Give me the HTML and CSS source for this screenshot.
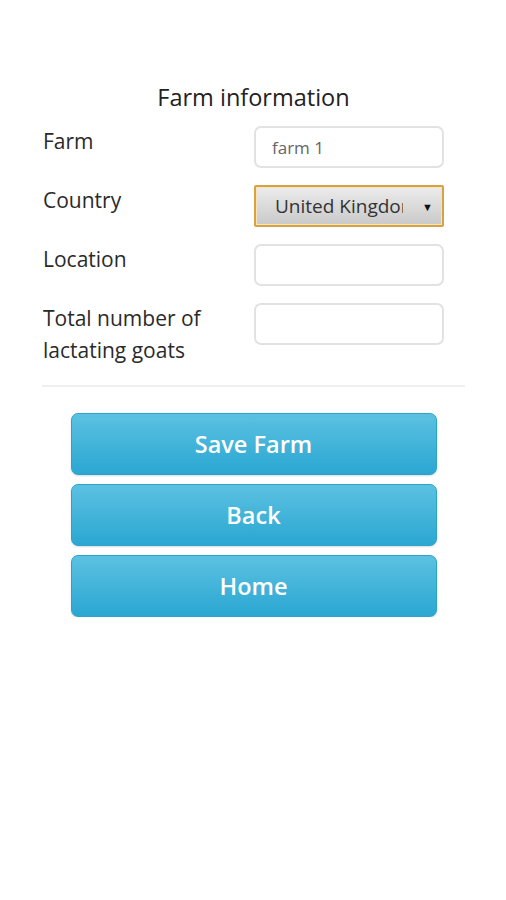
FILE: index.html
```html
<!DOCTYPE html>
<html>
<head>
<meta charset="utf-8">
<link rel="stylesheet" href="styles.css">
</head>
<body>
<div class="page">
  <h1 class="title">Farm information</h1>
  <div class="form">
    <label class="label">Farm</label>
    <div class="field"><input class="input" type="text" value="farm 1"></div>
    <label class="label">Country</label>
    <div class="field">
      <div class="select">
        <span class="select-text">United Kingdom</span>
        <span class="select-arrow">▼</span>
      </div>
    </div>
    <label class="label">Location</label>
    <div class="field"><input class="input" type="text"></div>
    <label class="label">Total number of lactating goats</label>
    <div class="field"><input class="input" type="text"></div>
  </div>
  <hr class="divider">
  <div class="buttons">
    <button class="btn">Save Farm</button>
    <button class="btn">Back</button>
    <button class="btn">Home</button>
  </div>
</div>
</body>
</html>
```
FILE: styles.css
```css
html, body {
  margin: 0;
  padding: 0;
  background: #ffffff;
}
body {
  font-family: "Open Sans", "Noto Sans", sans-serif;
  color: #222;
}
.page {
  width: 423px;
  margin-left: 42px;
  padding-top: 83px;
}
.title {
  margin: 0 0 14px 0;
  text-align: center;
  font-size: 23.5px;
  font-weight: 400;
  line-height: 29px;
  color: #222;
}
.form {
  display: grid;
  grid-template-columns: 212px 190px;
  row-gap: 17px;
}
.label {
  font-size: 21px;
  line-height: 32px;
  margin-top: -1px;
  padding-left: 1px;
  color: #2a2a2a;
  width: 185px;
}
.field {
  height: 42px;
}
.input {
  box-sizing: border-box;
  width: 190px;
  height: 42px;
  border: 2px solid #e2e2e2;
  border-radius: 7px;
  background: #fff;
  padding: 0 16px;
  font-family: "Open Sans", "Noto Sans", sans-serif;
  font-size: 17px;
  color: #666;
  outline: none;
}
.select {
  box-sizing: border-box;
  width: 190px;
  height: 42px;
  border: 2px solid #d8a23e;
  border-radius: 2px;
  background: linear-gradient(#ececec, #c9c9c9);
  display: flex;
  align-items: center;
  padding-left: 19px;
  padding-right: 9px;
  box-shadow: inset 0 0 0 1px #f3e3c0;
}
.select-text {
  flex: 0 0 128px;
  overflow: hidden;
  white-space: nowrap;
  font-size: 19px;
  color: #333;
}
.select-arrow {
  margin-left: auto;
  font-size: 11px;
  color: #111;
}
.divider {
  margin: 19px 0 0 0;
  border: 0;
  height: 2px;
  background: #efefef;
}
.buttons {
  display: flex;
  flex-direction: column;
  align-items: center;
  gap: 9px;
  margin-top: 26px;
}
.btn {
  width: 366px;
  height: 62px;
  border: 1px solid #2ba3cc;
  border-radius: 7px;
  background: linear-gradient(#5cc1e1, #2aa7d2);
  color: #fff;
  font-family: "Open Sans", "Noto Sans", sans-serif;
  font-size: 23.5px;
  font-weight: 600;
  box-shadow: 0 1px 2px rgba(0,0,0,0.15);
}
```
